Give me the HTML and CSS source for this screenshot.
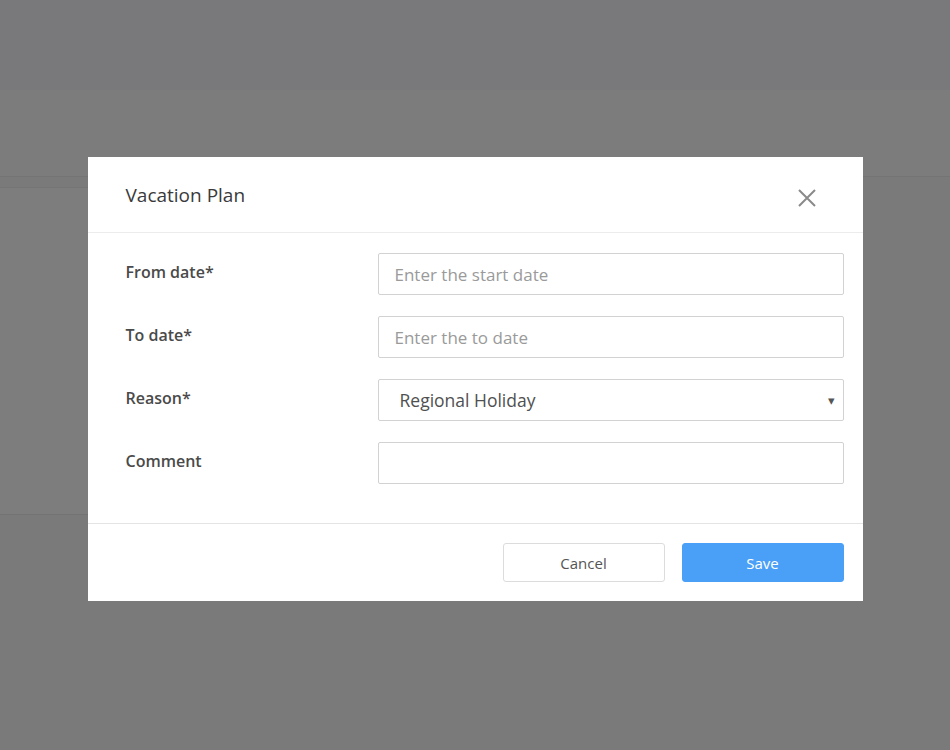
FILE: index.html
```html
<!DOCTYPE html>
<html>
<head>
<meta charset="utf-8">
<link rel="stylesheet" href="styles.css">
</head>
<body>
<div class="page">
  <div class="topbar"></div>
  <div class="band"></div>
  <div class="card"></div>
</div>
<div class="overlay">
  <div class="modal">
    <div class="modal-header">
      <h2 class="modal-title">Vacation Plan</h2>
      <button class="close" aria-label="Close">
        <svg width="20" height="20" viewBox="0 0 20 20"><path d="M2 2 L18 18 M18 2 L2 18" stroke="#8a8a8a" stroke-width="2" fill="none"/></svg>
      </button>
    </div>
    <div class="modal-body">
      <label class="label">From date*</label>
      <div class="field placeholder">Enter the start date</div>
      <label class="label">To date*</label>
      <div class="field placeholder">Enter the to date</div>
      <label class="label">Reason*</label>
      <div class="field select"><span>Regional Holiday</span><span class="arrow">▾</span></div>
      <label class="label">Comment</label>
      <div class="field"></div>
    </div>
    <div class="modal-footer">
      <button class="btn btn-cancel">Cancel</button>
      <button class="btn btn-save">Save</button>
    </div>
  </div>
</div>
</body>
</html>
```

FILE: styles.css
```css
html, body {
  margin: 0;
  padding: 0;
}
body {
  width: 950px;
  height: 750px;
  background: #7a7a7b;
  font-family: "Open Sans", "Noto Sans", sans-serif;
  overflow: hidden;
  position: relative;
}
.page {
  display: flex;
  flex-direction: column;
}
.topbar {
  height: 90px;
  background: #79787a;
}
.band {
  height: 86px;
  background: #7c7c7c;
  border-bottom: 1px solid #747474;
}
.card {
  margin-top: 10px;
  width: 720px;
  height: 326px;
  background: #7d7d7d;
  border-top: 1px solid #757575;
  border-bottom: 1px solid #737373;
}
.overlay {
  position: absolute;
  inset: 0;
  display: flex;
  justify-content: center;
  align-items: flex-start;
  padding-top: 157px;
}
.modal {
  width: 775px;
  background: #fff;
}
.modal-header {
  height: 76px;
  box-sizing: border-box;
  display: flex;
  align-items: center;
  justify-content: space-between;
  padding: 0 46px 0 38px;
  border-bottom: 1px solid #ececec;
}
.modal-title {
  margin: 0;
  font-size: 19px;
  font-weight: 400;
  color: #3a3a3a;
  padding-top: 1px;
}
.close {
  border: 0;
  background: none;
  padding: 0;
  margin-top: 7px;
  display: flex;
}
.modal-body {
  display: grid;
  grid-template-columns: 252px 1fr;
  row-gap: 21px;
  padding: 20px 19px 39px 38px;
}
.label {
  font-size: 16px;
  font-weight: 600;
  color: #4a4a4a;
  align-self: center;
  margin-top: -4px;
}
.field {
  height: 42px;
  box-sizing: border-box;
  border: 1px solid #d2d2d2;
  border-radius: 2px;
  display: flex;
  align-items: center;
  padding: 0 16px;
  font-size: 17px;
  color: #555;
}
.placeholder {
  color: #9a9a9a;
}
.select {
  justify-content: space-between;
  padding: 0 8px 0 21px;
  font-size: 17.5px;
  color: #505050;
}
.arrow {
  font-size: 13px;
  color: #555;
}
.modal-footer {
  border-top: 1px solid #e4e4e4;
  display: flex;
  justify-content: flex-end;
  gap: 17px;
  padding: 19px 19px 19px 0;
}
.btn {
  width: 162px;
  height: 39px;
  border-radius: 3px;
  font-family: "Open Sans", "Noto Sans", sans-serif;
  font-size: 15px;
  cursor: pointer;
}
.btn-cancel {
  background: #fff;
  border: 1px solid #dcdcdc;
  color: #555;
}
.btn-save {
  background: #4aa0f7;
  border: 1px solid #4aa0f7;
  color: #fff;
}
```
